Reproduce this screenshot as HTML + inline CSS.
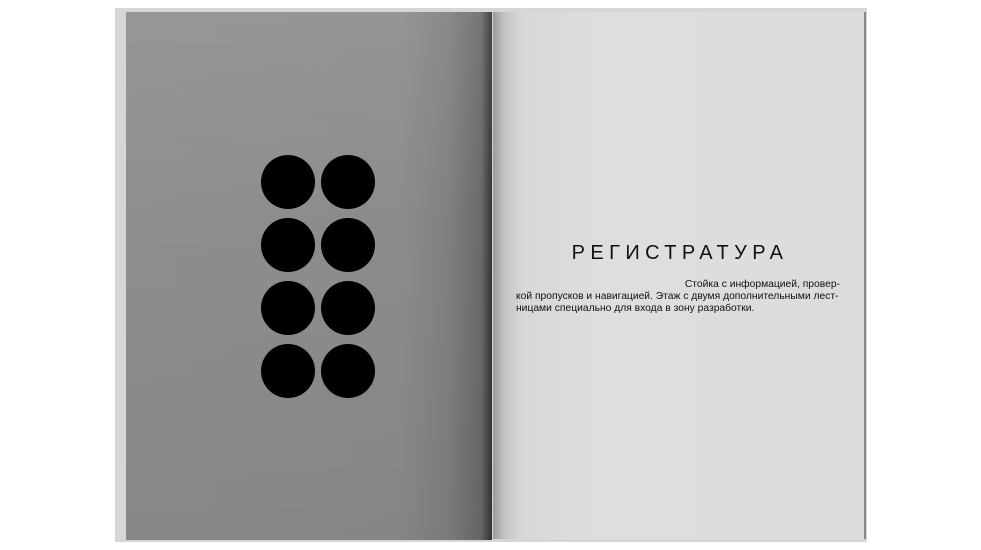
<!DOCTYPE html>
<html><head><meta charset="utf-8"><style>
html,body{margin:0;padding:0;background:#fff;width:981px;height:550px;overflow:hidden;position:relative}
.cover{position:absolute;left:115px;top:8px;width:752px;height:534px;background:#d6d6d4;}
.lp{position:absolute;left:126px;top:12px;width:366px;height:528px;
background:linear-gradient(90deg,#8e8e8e 0%,#8c8c8c 75%,#808080 88%,#6a6a6a 97%,#333 100%);}
.lp2{position:absolute;left:126px;top:12px;width:366px;height:528px;
background:linear-gradient(180deg,rgba(255,255,255,0.08),rgba(255,255,255,0) 40%,rgba(0,0,0,0.05));}
.rp{position:absolute;left:493px;top:12px;width:371px;height:527px;
background:linear-gradient(90deg,#9a9a9a 0%,#c4c4c4 3%,#d8d8d7 8%,#dedede 30%,#dcdcdb 100%);}
.rpe{position:absolute;left:864px;top:12px;width:2px;height:527px;background:#888}
.c{position:absolute;width:54px;height:54px;border-radius:50%;background:#000}
.t{position:absolute;left:560px;top:242px;width:240px;text-align:center;font:300 20px "Liberation Sans",sans-serif;letter-spacing:5.4px;color:#111}
.p{position:absolute;left:516px;top:279px;width:324px;font:10.3px/12px "Liberation Sans",sans-serif;color:#111;white-space:nowrap}
</style></head><body>
<div class="cover"></div>
<div class="lp"></div><div class="lp2"></div>
<div class="rp"></div><div class="rpe"></div>
<div class="c" style="left:261px;top:155px"></div><div class="c" style="left:321px;top:155px"></div>
<div class="c" style="left:261px;top:218px"></div><div class="c" style="left:321px;top:218px"></div>
<div class="c" style="left:261px;top:281px"></div><div class="c" style="left:321px;top:281px"></div>
<div class="c" style="left:261px;top:344px"></div><div class="c" style="left:321px;top:344px"></div>
<div class="t">РЕГИСТРАТУРА</div>
<div class="p"><div style="text-align:right">Стойка с информацией, провер-</div><div>кой пропусков и навигацией. Этаж с двумя дополнительными лест-</div><div>ницами специально для входа в зону разработки.</div></div>
</body></html>
